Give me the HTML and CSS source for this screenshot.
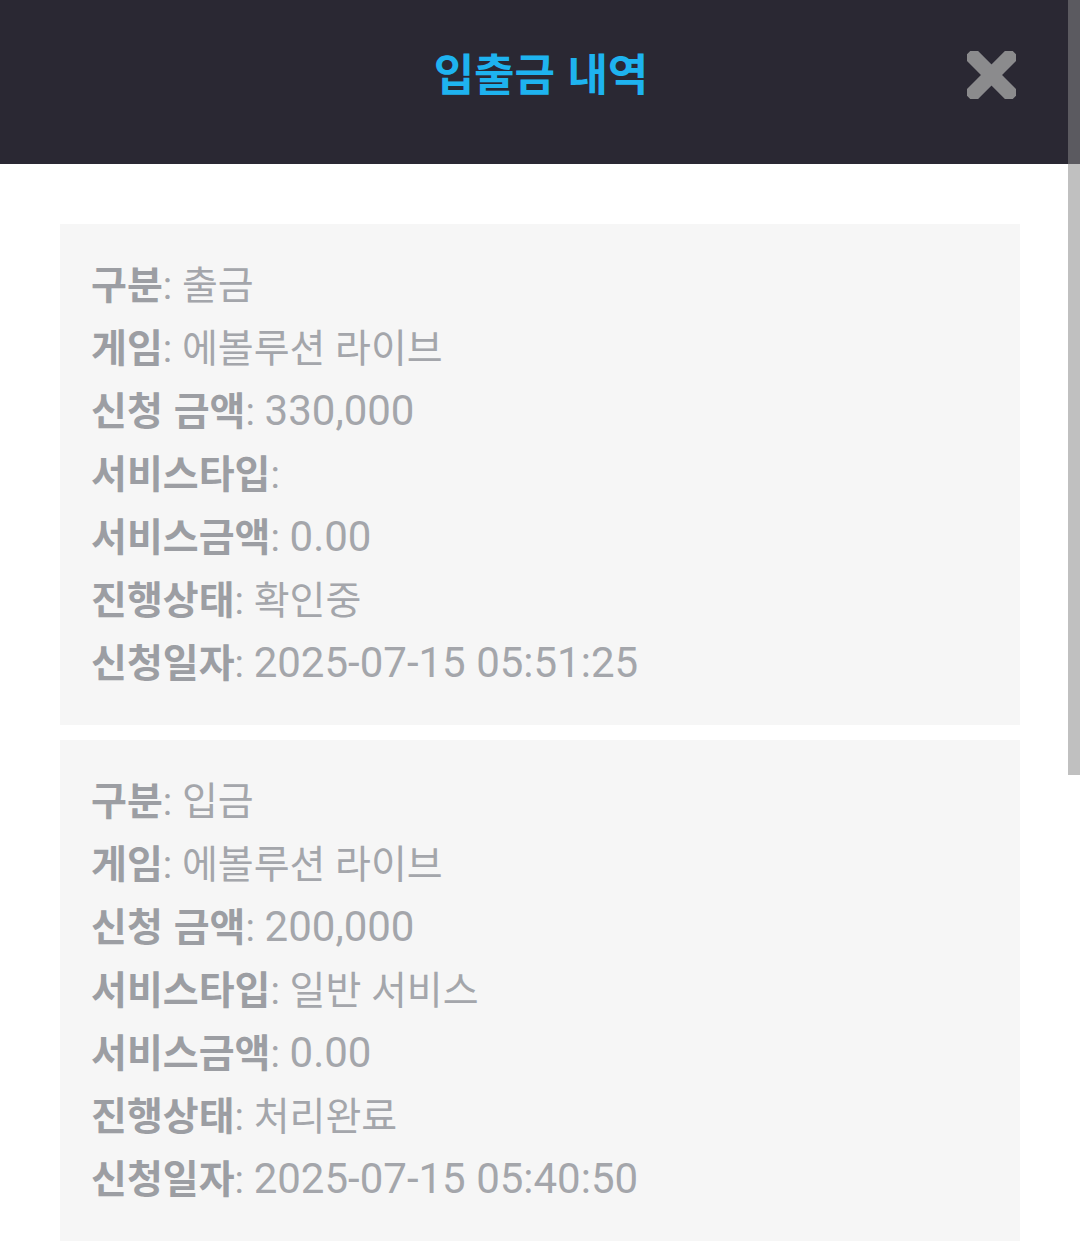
FILE: index.html
```html
<!DOCTYPE html>
<html lang="ko">
<head>
<meta charset="utf-8">
<title>입출금 내역</title>
<link rel="stylesheet" href="styles.css">
</head>
<body>
<div class="app">
  <header class="topbar">
    <h1 class="title">입출금 내역</h1>
    <button class="close" aria-label="닫기">
      <svg viewBox="0 0 49 48" width="49" height="48">
        <g fill="#8b8b8d" transform="translate(24.5 24)">
          <rect x="-32" y="-7.5" width="64" height="15" rx="4" transform="rotate(45)"/>
          <rect x="-32" y="-7.5" width="64" height="15" rx="4" transform="rotate(-45)"/>
        </g>
      </svg>
    </button>
  </header>
  <main class="list">
    <section class="card">
      <p class="row"><span class="k">구분</span><span class="v">: 출금</span></p>
      <p class="row"><span class="k">게임</span><span class="v">: 에볼루션 라이브</span></p>
      <p class="row"><span class="k">신청 금액</span><span class="v">: <span class="num">330,000</span></span></p>
      <p class="row"><span class="k">서비스타입</span><span class="v">:</span></p>
      <p class="row"><span class="k">서비스금액</span><span class="v">: <span class="num">0.00</span></span></p>
      <p class="row"><span class="k">진행상태</span><span class="v">: 확인중</span></p>
      <p class="row"><span class="k">신청일자</span><span class="v">: <span class="num">2025-07-15 05:51:25</span></span></p>
    </section>
    <section class="card">
      <p class="row"><span class="k">구분</span><span class="v">: 입금</span></p>
      <p class="row"><span class="k">게임</span><span class="v">: 에볼루션 라이브</span></p>
      <p class="row"><span class="k">신청 금액</span><span class="v">: <span class="num">200,000</span></span></p>
      <p class="row"><span class="k">서비스타입</span><span class="v">: 일반 서비스</span></p>
      <p class="row"><span class="k">서비스금액</span><span class="v">: <span class="num">0.00</span></span></p>
      <p class="row"><span class="k">진행상태</span><span class="v">: 처리완료</span></p>
      <p class="row"><span class="k">신청일자</span><span class="v">: <span class="num">2025-07-15 05:40:50</span></span></p>
    </section>
  </main>
  <div class="scrollthumb"></div>
</div>
</body>
</html>
```
FILE: styles.css
```css
html, body {
  margin: 0;
  padding: 0;
  background: #ffffff;
  overflow: hidden;
}
body {
  font-family: "Roboto", "Noto Sans CJK KR", sans-serif;
}
.app {
  position: relative;
  width: 1080px;
  min-height: 1256px;
}
.topbar {
  height: 164px;
  background: #2a2833;
  display: flex;
  align-items: flex-start;
  justify-content: center;
  position: relative;
}
.title {
  margin: 37px 0 0 2px;
  font-family: "Noto Sans CJK KR", sans-serif;
  font-weight: 700;
  font-size: 44px;
  line-height: 70px;
  color: #1eb3ef;
}
.close {
  position: absolute;
  left: 967px;
  top: 51px;
  width: 49px;
  height: 48px;
  padding: 0;
  border: 0;
  background: transparent;
  display: block;
}
.close svg {
  display: block;
}
.list {
  padding: 60px 60px 20px 60px;
  display: flex;
  flex-direction: column;
  gap: 15px;
}
.card {
  background: #f6f6f6;
  padding: 27px 31px 33px 31px;
}
.row {
  margin: 0;
  height: 63px;
  line-height: 63px;
  white-space: nowrap;
  font-size: 39px;
  font-family: "Roboto", "Noto Sans CJK KR", sans-serif;
}
.k {
  font-family: "Noto Sans CJK KR", sans-serif;
  font-weight: 700;
  color: #9c9ea3;
}
.v {
  font-weight: 400;
  color: #a4a6ab;
}
.num {
  font-size: 42px;
}
.scrollthumb {
  position: absolute;
  right: 0;
  top: 0;
  width: 12px;
  height: 775px;
  background: rgba(136, 136, 136, 0.53);
}
```
